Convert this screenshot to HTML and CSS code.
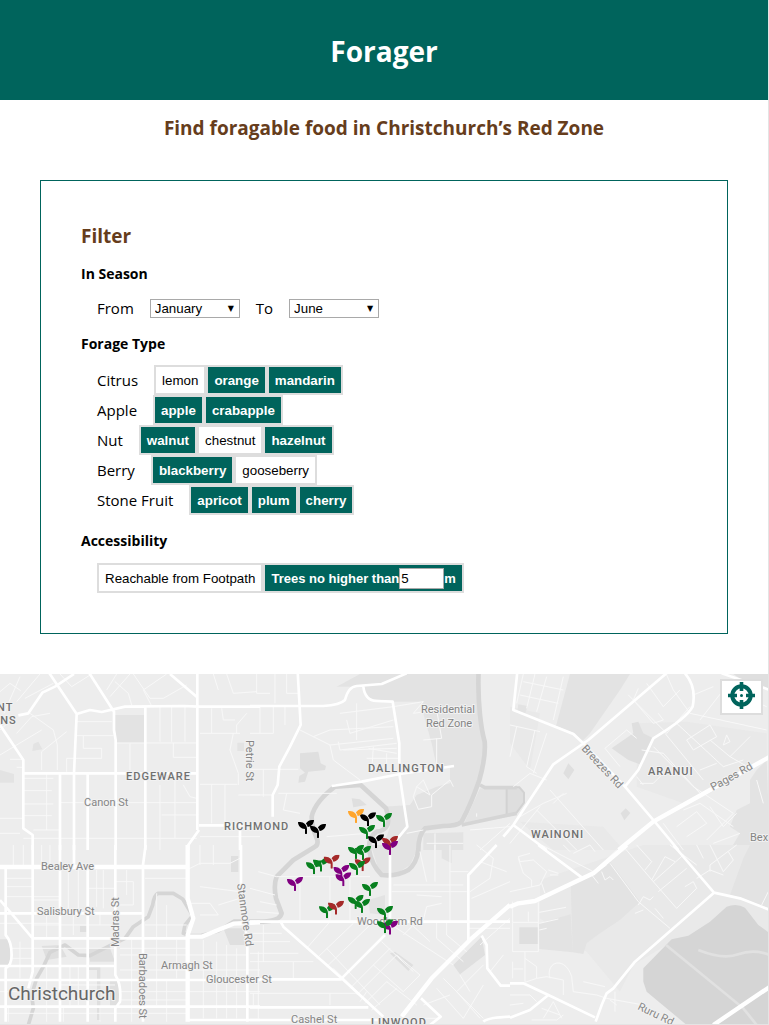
FILE: index.html
```html
<!DOCTYPE html>
<html lang="en">
<head>
<meta charset="utf-8">
<meta name="viewport" content="width=device-width, initial-scale=1">
<title>Forager</title>
<link rel="stylesheet" href="styles.css">
</head>
<body>
<div class="page">
  <header class="banner"><h1>Forager</h1></header>
  <main>
    <p class="tagline">Find foragable food in Christchurch’s Red Zone</p>
    <form class="filter">
      <h2>Filter</h2>
      <h3>In Season</h3>
      <div class="row season">
        <label for="from">From</label>
        <span class="select"><select id="from"><option>January</option><option>February</option><option>March</option></select></span>
        <label for="to">To</label>
        <span class="select"><select id="to"><option>June</option><option>July</option><option>August</option></select></span>
      </div>
      <h3>Forage Type</h3>
      <div class="types">
        <div class="row"><span class="name">Citrus</span><button type="button" class="chip">lemon</button><button type="button" class="chip on">orange</button><button type="button" class="chip on">mandarin</button></div>
        <div class="row"><span class="name">Apple</span><button type="button" class="chip on">apple</button><button type="button" class="chip on">crabapple</button></div>
        <div class="row"><span class="name">Nut</span><button type="button" class="chip on">walnut</button><button type="button" class="chip">chestnut</button><button type="button" class="chip on">hazelnut</button></div>
        <div class="row"><span class="name">Berry</span><button type="button" class="chip on">blackberry</button><button type="button" class="chip">gooseberry</button></div>
        <div class="row"><span class="name">Stone Fruit</span><button type="button" class="chip on">apricot</button><button type="button" class="chip on">plum</button><button type="button" class="chip on">cherry</button></div>
      </div>
      <h3>Accessibility</h3>
      <div class="row access"><button type="button" class="chip">Reachable from Footpath</button><label class="chip on height">Trees no higher than<input type="text" inputmode="numeric" value="5">m</label></div>
    </form>
    <section class="map" aria-label="Map of forage sites">
      <svg class="canvas" viewBox="0 0 768 350" preserveAspectRatio="xMidYMid slice">
        <defs>
          <symbol id="sprout" viewBox="0 32 512 448"><path d="M64 96H0c0 123.700 100.300 224 224 224v144c0 8.800 7.200 16 16 16h32c8.800 0 16-7.200 16-16V320C288 196.300 187.700 96 64 96zm384-64c-84.200 0-157.400 46.500-195.700 115.200 27.700 30.200 48.200 66.900 59 107.600C424 243.100 512 147.900 512 32h-64z"/></symbol>
        </defs>
        <g transform="translate(0 -4) scale(.33333)">
          <!-- parks and reserves -->
          <g class="park">
            <path d="M343 135h90v84h-86zM100 222l15-7 12 23-30 5zM0 300l42 12v26H0zM712 218h20v25h-20z"/>
            <g transform="translate(750 0)">
              <path d="M260 50L330 12H690V180L705 230 690 330 630 460 520 480 500 540H395L420 470 400 410 480 405 500 375 560 350 600 340V290L560 290 545 220 510 95H430L355 85 335 50z"/>
              <path d="M690 355H780V440L640 465zM520 490L640 487V540H520z"/>
              <path class="dark" d="M150 250l55-5 7 35 16 8-3 12-50 5-10 30-20 3 3-20 17-10-15-13zM305 385l25 3 20 17-40 7z"/>
            </g>
            <g transform="translate(1530 0)">
              <path class="faint" d="M380 160L530 155 770 190V260L600 370 520 400 380 350zM0 110L90 130 60 300 0 220zM30 455L280 470 340 540H130z"/>
              <path d="M180 12H360L330 60 240 190 215 215 195 190 138 168zM25 103l28 5-8 25-24-4zM770 270L740 300 720 330V400L680 420 660 470 690 490 660 540H780z"/>
              <path class="dark" d="M305 235L370 190 365 160 385 155 400 190 430 205 395 285 355 270zM160 310l15-30 18 20-18 28zM332 430l15-15 14 14-18 22zM670 12H780V60L730 55z"/>
              <path class="pond" d="M-10 352H28L42 368V398L20 428-10 436z"/>
            </g>
            <g transform="translate(0 525)">
              <path class="dark" d="M0 283h30v78H0zM125 303l55-3 20 35-60 10zM265 310h65l15 40h-75zM330 405h28v78h-28zM693 33h22v48h-22zM670 250h70v50h-50zM240 243h20v18h-20zM265 360h36v165h-10V375h-26z"/>
            </g>
            <g transform="translate(750 525)">
              <path d="M362 0H508L480 60 430 92 390 85zM575 0h30v55l-30-15zM355 165l50-15v60l-45-5z"/>
              <path class="dark" d="M420 325l15-5 55 40-15 18zM610 360l85-85 10 55-75 58z"/>
            </g>
            <g transform="translate(1530 525)">
              <path class="faint" d="M90 105L400 0H780V300L470 300 370 360 330 440 230 320 90 220z"/>
              <path d="M182 110L245 90 300 50 390 170 330 225 270 265 230 295 220 327 188 322zM87 235L182 208 188 322 88 312zM700 40L720 0H780V190L660 150z"/>
              <path class="dark" d="M28 247h57v50H28z"/>
              <path class="lake" d="M400 370L485 283 535 272 600 230 650 185Q680 173 705 188L745 240 780 265V540H530L410 440 400 410z"/>
              <path class="trail" d="M468 300L700 490 740 540M565 315Q640 345 685 328T780 330"/>
            </g>
          </g>
          <!-- rivers -->
          <g class="river">
            <g transform="translate(750 0)">
              <path class="wide" d="M686 0C682 100 694 180 704 215Q708 260 688 330 664 400 635 455 620 468 580 468L525 475Q505 495 505 540 500 580 475 600 440 620 395 615 365 585 357 540 355 500 380 485 430 480 408 415L332 345 255 350Q195 395 185 440 185 470 202 510 205 525 195 530L130 570 80 620Q70 645 78 685L95 730Q90 753 40 755L-50 755"/>
              <path d="M690 345L705 353H800M635 465L800 430"/>
            </g>
            <g transform="translate(0 525)"><path d="M780 230H700L655 258 600 272H570L550 265 555 240 578 212 548 162 520 145H475Q462 150 458 180L445 215 400 245 375 280 330 302 270 332 235 330 195 300 150 322 130 365 110 400 95 450 100 490 85 540"/></g>
          </g>
          <!-- side streets -->
          <g class="lane">
            <path d="M0 65L30 40 62 62M12 130L60 20M50 95L120 12M75 85L160 40M90 130L160 180 172 225V300M50 190L95 140 150 130M0 180L45 140M0 255L125 180M125 300V245L200 185M230 155H335M230 197H340M250 197V235H305V265H200V305M70 268H30M70 292H50M275 12L215 50 180 12M330 80L390 12M320 60L350 12M395 105L385 70 345 35M455 108L430 60 500 12M400 12L450 85 490 85 560 45M480 110V215M515 110V215M555 110V215M350 219H590M390 220V300M520 219V262H590M600 190H720M635 115V190M665 115L670 150 705 150M700 190L690 240 715 310 715 345M740 130L710 165V190M680 12L700 70 770 65M640 12L655 60M600 343H712M635 343V460M675 343V460M715 375H780M600 500H780M70 325H160M70 362H155M70 402H160M70 437H155M0 445H70M0 490H60M140 312V480M180 398H590M70 505H590M525 310V505M480 345V540M550 345L570 380 590 385M485 435H595M100 480H180"/>
            <g transform="translate(750 0)"><path d="M20 12V70H60M75 12V100M110 12V70H145M0 190H70V110M105 110V165M0 298H145M30 110V190M40 298V380M85 370H260M150 180L190 200 240 180 430 170M190 200L240 225 430 205M240 225L250 270 290 300 330 330M265 215L270 240 440 220M280 240L440 235M290 150L300 190 430 150M320 100V210M270 130L430 110M355 235L440 250M370 230L365 310M410 250V310M350 265H445M430 110L520 95 490 130 560 120 575 205 520 210M560 205V285M500 350L520 330 540 375 500 350 490 380 505 418 545 410V375L600 330 610 350M470 490L520 480M110 370L100 420 150 430M0 375H65M230 500L350 490M555 490V540M530 520H640M660 480L780 470M690 540L780 460M680 430V440"/></g>
            <g transform="translate(1530 0)"><path d="M40 12L20 100M75 12L50 115M110 20L80 125M160 20L130 150M40 35L160 60M30 75L145 100M0 165L90 185M75 180L50 290 80 310M20 170L0 260M110 190L70 310M10 350L60 310 110 330M30 440L100 400 170 370M80 420L200 540M120 360L280 540M130 400L160 370M0 520L90 410M355 75L470 190 540 110M385 55L370 90 430 160 460 150 445 130M410 40L460 110 510 60M470 15L490 60 540 130M550 75L610 50M540 130L770 180M570 150L640 60M530 210L600 165 620 200 550 240zM500 160L640 290 700 270M465 190L580 330M430 230L550 350 670 430 590 510M600 210L660 260 720 200M640 225L650 195 660 215 640 225M660 260L730 300M285 235L350 180 380 205M285 235L330 290M395 240L460 250 570 370M390 340L430 340 460 310M380 320L400 345M570 300L620 280M520 420L570 400 670 470M460 460L520 540M500 470L560 425 590 460 530 500M600 410L640 470 680 430M610 520L690 490M740 330L760 400M700 80L770 110"/></g>
            <g transform="translate(0 525)"><path d="M40 0V60M70 0V60M125 0V60M150 0V60M20 100H95M20 125H95M20 155H180M100 165H180M205 75V200M235 75V200M265 130H345M290 75V185M310 75V190M345 110H400V180H350M100 240H345M0 235H180M140 200V280M220 200V270M300 200V240M380 75V150M435 100H560M560 75L600 55H690L720 40M560 175H630L655 210H600M655 180L720 160M600 125L720 140M600 0V60M640 0V60M435 240H560M470 145V280M500 180V280M35 310H345M35 340H100M60 290V400M140 365V530M210 365V480M235 365V480M100 440H345M180 420H345M0 440H90M20 505H560M360 310H560M360 330H740M360 375H780M360 440H780M360 465H560M395 285V480M470 285V480M500 405V530M530 285V400M610 285V520M650 290V520M680 300V520M710 310V520M775 320V520M25 485V530M190 485V530M300 485V530M395 485V530"/></g>
            <g transform="translate(750 525)"><path d="M80 95H360M25 80L80 95M150 95V225M240 95V225M300 100V225M0 130L75 150M30 170L80 180M20 200L85 205M0 265H95M0 290H120M0 325H145M0 350H190M40 240V350M0 445H330M130 350V400M10 445V480M240 445V480M170 310L240 230M200 340L310 235M230 365L360 240M300 430L420 310M320 450L440 330 510 390 460 440 370 360M345 475L410 410 500 480M365 495L440 430M250 370L380 495M230 310L390 480M395 290L490 380M425 240L610 360M470 225L540 290M560 230V280L640 350M590 230V270L650 320M460 270L500 230M500 150L575 155M520 225L530 185 575 175M430 120H640M425 140H650M555 0V110M510 20L530 110M600 80H655M660 140L720 100 730 40 680 0M665 160L780 110M690 50L770 80M600 230V0M655 250H780M690 300L780 220M700 360L620 440 690 520M560 430L640 520 700 420M580 400L700 520M630 390L660 440M520 480L600 450M330 470L350 440M720 380L760 330M520 520H570"/></g>
            <g transform="translate(1530 525)"><path d="M0 140L90 120 110 80 70 45 30 50 25 35 60 25M25 40L40 85 65 105V125M95 115L105 145M120 90H145M115 75L145 85M95 0L250 80 320 15M190 25L240 0 255 20M160 0L180 20M300 55L385 170 480 250M345 10L430 110 500 190 560 130 550 110 525 125M380 0L425 50 405 75M430 110L520 30M425 105L465 35 495 50M480 0L560 60M445 140L530 70M560 0L580 40M600 80V60L680 0M560 100L600 75 640 90M600 0L640 80 670 45 655 20M290 60L245 90 265 115M275 80L285 105 300 95 310 105M375 205L400 195M385 180L400 155 420 165 430 155M435 190L460 220M88 255L110 250M85 172V320H8V232H85M55 200V230M8 232V170M88 235L145 222M88 202L168 187M45 320V410M8 350V400M10 372H40M45 340L80 365V400L45 412M80 400L110 395 160 405V450M120 400C105 350 165 330 185 395L190 440 260 450 290 460 400 480M220 410L285 425M315 440V500M300 465L320 480M0 450H60L80 470M0 480L40 475M65 525H140L160 510M100 520L130 470 155 520M95 490L150 510M755 180L775 140"/></g>
          </g>
          <!-- main roads -->
          <g class="road">
            <path class="main" d="M145 5L230 132 222 310V540M165 50L127 68 85 130 55 136M265 5L342 125V180L347 210V540M230 132L270 120 305 126 375 110 550 108 595 110H780M510 12L590 80M592 5V480M0 165L50 240 70 270V475L98 495V540M70 310H592M436 110V540M180 310V540M263 310V540M597 466H780M597 480L565 525V540M720 480V540M165 50L222 12"/>
            <g transform="translate(750 0)">
              <path class="main" d="M143 5L152 165 120 230 88 290 83 345 68 375V440M0 108H220Q270 105 285 90 295 50 320 48L395 42 470 10M340 50Q345 92 380 93L428 95 448 220V310L472 470 435 515M245 348L335 335 450 312 612 288"/>
            </g>
            <g transform="translate(1530 0)">
              <path class="big" d="M326 540L430 455 600 360 780 260"/>
              <path class="main" d="M22 5L10 120 190 192 215 215 345 350 430 450 505 540M475 5L235 210 130 283 10 465-20 500M525 10Q560 50 548 110 530 145 430 205L385 300 345 350M10 465L110 540M635 10L780 60"/>
            </g>
            <g transform="translate(0 525)">
              <path class="big" d="M0 66H565M563 0V160L580 220 563 270V530M568 275H605L700 236 780 232"/>
              <path class="main" d="M98 0V380L85 430M17 70V270Q35 290 35 330 35 360 17 370V530M180 0V530M222 0V66M263 66V530M346 0V390Q365 420 360 470L346 490V530M437 0L429 60V530M0 165L98 280M0 205H429M98 280H563M0 363H346M0 405H780M0 485H780M563 525H780M723 0V130L742 300V530"/>
            </g>
            <g transform="translate(750 525)">
              <path class="big" d="M455 515L545 400 665 280 780 180"/>
              <path class="main" d="M0 230H780M92 230L100 245 275 400 400 515M275 400L405 270M420 30V225M0 403H275M0 487H355M0 525H400M740 0L655 90V285M695 272L710 300 712 370 752 422H780M513 460L572 515 540 540M700 530Q710 518 780 515"/>
            </g>
            <g transform="translate(1530 525)">
              <path class="big" d="M0 185L25 175 75 168 250 85 350 0M610 540L780 425"/>
              <path class="main" d="M85 0L215 97M490 0L612 143 690 160 780 195M612 143L375 350 310 430 290 445 275 480 257 530M0 415H40L115 450 255 517M115 450L60 495 0 518"/>
            </g>
          </g>
        </g>
        <!-- place names -->
        <g class="street">
          <text x="84" y="132">Canon St</text>
          <text x="41" y="196">Bealey Ave</text>
          <text x="37" y="241">Salisbury St</text>
          <text x="161" y="295">Armagh St</text>
          <text x="206" y="309">Gloucester St</text>
          <text x="291" y="349">Cashel St</text>
          <text x="357" y="251">Woodham Rd</text>
          <text x="421" y="39">Residential</text>
          <text x="426" y="53">Red Zone</text>
          <text x="750" y="167">Bex</text>
          <text transform="translate(246 66) rotate(90)">Petrie St</text>
          <text transform="translate(119 273) rotate(-90)">Madras St</text>
          <text transform="translate(139 279) rotate(90)">Barbadoes St</text>
          <text transform="translate(237 210) rotate(82)">Stanmore Rd</text>
          <text transform="translate(581 75) rotate(47)">Breezes Rd</text>
          <text transform="translate(713 117) rotate(-29)">Pages Rd</text>
          <text transform="translate(637 335) rotate(26)">Ruru Rd</text>
        </g>
        <g class="suburb">
          <text x="126" y="106">EDGEWARE</text>
          <text x="224" y="156">RICHMOND</text>
          <text x="368" y="98">DALLINGTON</text>
          <text x="648" y="101">ARANUI</text>
          <text x="531" y="164">WAINONI</text>
          <text x="371" y="352">LINWOOD</text>
          <text x="-3" y="37">NT</text>
          <text x="-7" y="50">ENS</text>
        </g>
        <text class="city" x="8" y="326">Christchurch</text>
        <!-- forage sites -->
        <g transform="translate(280 126) scale(.33333)">
          <g class="black"><use href="#sprout" x="54" y="60" width="48" height="42"/><use href="#sprout" x="90" y="72" width="48" height="42"/><use href="#sprout" x="240" y="37" width="48" height="42"/></g>
          <use class="orange" href="#sprout" x="204" y="27" width="48" height="42"/>
          <g class="green"><use href="#sprout" x="288" y="39" width="48" height="42"/><use href="#sprout" x="237" y="75" width="48" height="42"/><use href="#sprout" x="204" y="135" width="48" height="42"/><use href="#sprout" x="225" y="138" width="48" height="42"/><use href="#sprout" x="78" y="181" width="48" height="42"/><use href="#sprout" x="99" y="173" width="48" height="42"/><use href="#sprout" x="246" y="246" width="48" height="42"/><use href="#sprout" x="203" y="285" width="48" height="42"/><use href="#sprout" x="222" y="297" width="48" height="42"/><use href="#sprout" x="117" y="313" width="48" height="42"/><use href="#sprout" x="291" y="318" width="48" height="42"/></g>
          <use class="black" href="#sprout" x="264" y="103" width="48" height="42"/>
          <g class="red"><use href="#sprout" x="306" y="108" width="48" height="42"/><use href="#sprout" x="131" y="164" width="48" height="42"/><use href="#sprout" x="224" y="172" width="48" height="42"/><use href="#sprout" x="144" y="302" width="48" height="42"/></g>
          <g class="purple"><use href="#sprout" x="306" y="123" width="48" height="42"/><use href="#sprout" x="160" y="195" width="48" height="42"/><use href="#sprout" x="166" y="217" width="48" height="42"/><use href="#sprout" x="21" y="231" width="48" height="42"/><use href="#sprout" x="306" y="362" width="48" height="42"/></g>
          <g class="green"><use href="#sprout" x="207" y="183" width="48" height="42"/><use href="#sprout" x="291" y="358" width="48" height="42"/></g>
        </g>
      </svg>
      <button type="button" class="locate" aria-label="Show my location">
        <svg viewBox="0 0 27 27" width="27" height="27"><circle cx="13.500" cy="13.500" r="9.200" fill="none" stroke="currentColor" stroke-width="4"/><path d="M13.500 0v9M13.500 18v9M0 13.500h9M18 13.500h9" fill="none" stroke="currentColor" stroke-width="3.600"/><circle cx="13.500" cy="13.500" r="1.500" fill="currentColor"/></svg>
      </button>
    </section>
  </main>
</div>
</body>
</html>
```

FILE: styles.css
```css
* { box-sizing: border-box; }

body {
  margin: 0;
  background: #fff;
  color: #000;
  font-family: "Open Sans", "Noto Sans", sans-serif;
  font-size: 15px;
}

.page {
  border-right: 1px solid #e4e4e4;
  border-bottom: 1px solid #e4e4e4;
}

.banner {
  display: flex;
  align-items: center;
  justify-content: center;
  padding: 31px 30px 29px;
  background: #00645c;
  color: #fff;
}

h1 { margin: 0; font-size: 28px; line-height: 40px; font-weight: 700; }

.tagline,
h2 {
  margin: 0;
  color: #663d1c;
  font-size: 19px;
  line-height: 28px;
  font-weight: 700;
}

.tagline { padding: 14px 20px 38px; text-align: center; }

.filter {
  margin: 0 40px 40px;
  padding: 41px 40px 40px;
  border: 1px solid #00645c;
}

h3 { margin: 0; font-size: 14px; line-height: 20px; font-weight: 700; }

h2 + h3 { margin-top: 14px; }

.row { display: flex; align-items: center; padding-left: 16px; }

.season { gap: 16px; margin: 14px 0 16px; }

.season label,
.name { line-height: 20px; }

.name { margin-right: 16px; }

.types { margin: 11px 0 16px; }

.access { margin-top: 12px; }

.select { position: relative; width: 90px; font-family: "DejaVu Sans", sans-serif; }

.select::after {
  content: "▼";
  position: absolute;
  top: 0;
  right: 6px;
  font-size: 8px;
  line-height: 19px;
  pointer-events: none;
}

.chip,
.chip input,
select { font-family: "Liberation Sans", Arial, sans-serif; }

select {
  display: block;
  width: 100%;
  height: 19px;
  padding: 0 4px;
  border: 1px solid #a9a9a9;
  border-radius: 0;
  background: #fff;
  color: #000;
  appearance: none;
}

.chip {
  display: inline-flex;
  align-items: center;
  height: 30px;
  padding: 0 6px;
  border: 2px solid #ddd;
  background: #fff;
  color: #000;
}

.chip.on { background: #00645c; color: #fff; font-weight: 700; }

.height { font-size: 13px; }

.chip input {
  width: 45px;
  height: 21px;
  padding: 1px;
  border: 1px solid #a9a9a9;
  background: #fff;
}

.map { position: relative; height: 350px; overflow: hidden; background: #ededed; }

.canvas { display: block; width: 100%; height: 100%; }

.locate {
  position: absolute;
  top: 5px;
  right: 5px;
  padding: 1px 6px 4px;
  border: 2px solid #ddd;
  background: #fff;
  color: #00645c;
}

.locate svg { display: block; }

.park { fill: #e3e3e3; }
.park .dark { fill: #dfdfdf; }
.park .faint { fill: #e9e9e9; }
.park .pond { fill: #dedede; stroke: #d2d2d2; stroke-width: 6; }
.park .lake { fill: #d5d5d5; }
.park .trail { fill: none; stroke: #e1e1e1; stroke-width: 8; }

.river { fill: none; stroke: #d5d5d5; stroke-width: 11; stroke-linejoin: round; }
.river .wide { stroke-width: 14; }

.lane { fill: none; stroke: #f8f8f8; stroke-width: 3; }

.road { fill: none; stroke: #fff; stroke-linejoin: round; }
.road .main { stroke-width: 8; }
.road .big { stroke-width: 13; }

.street,
.suburb,
.city {
  font-family: Roboto, sans-serif;
  paint-order: stroke;
  stroke: #f2f2f2;
  stroke-width: 2px;
  stroke-linejoin: round;
}

.street { font-size: 11px; fill: #858585; }
.suburb { font-size: 11px; font-weight: 500; letter-spacing: 1px; fill: #707070; }
.city { font-size: 19px; fill: #666; }

.black { fill: #000; }
.orange { fill: #ffa52c; }
.green { fill: #08801f; }
.red { fill: #a52a2a; }
.purple { fill: #800080; }
```
